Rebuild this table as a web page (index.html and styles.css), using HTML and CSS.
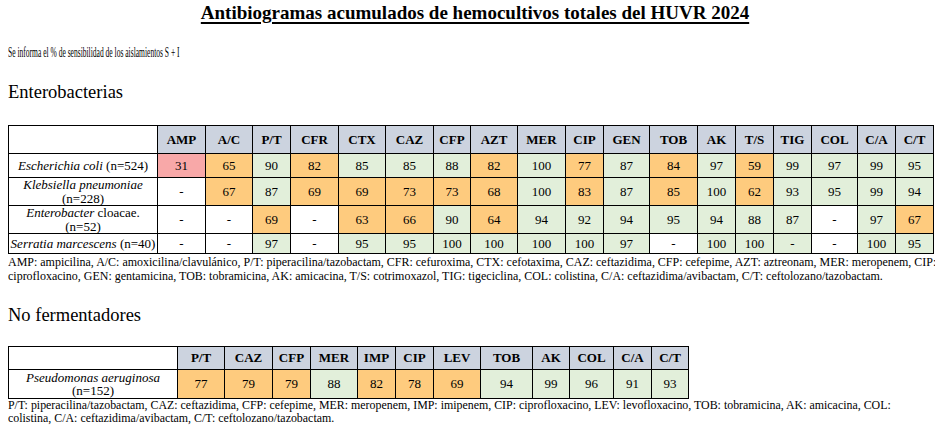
FILE: index.html
```html
<!DOCTYPE html>
<html lang="es">
<head>
<meta charset="utf-8">
<title>Antibiogramas acumulados HUVR 2024</title>
<link rel="stylesheet" href="styles.css">
</head>
<body>
<h1 class="title">Antibiogramas acumulados de hemocultivos totales del HUVR 2024</h1>
<p class="intro"><span class="squeeze">Se informa el % de sensibilidad de los aislamientos S + I</span></p>

<h2 class="section">Enterobacterias</h2>
<table class="abg t1">
  <colgroup>
    <col class="w149"><col class="w48"><col class="w47"><col class="w38"><col class="w48"><col class="w47"><col class="w48"><col class="w37"><col class="w47"><col class="w48"><col class="w38"><col class="w46"><col class="w48"><col class="w38"><col class="w38"><col class="w38"><col class="w46"><col class="w38"><col class="w38">
  </colgroup>
  <tr class="hrow">
    <th class="blank"></th><th>AMP</th><th>A/C</th><th>P/T</th><th>CFR</th><th>CTX</th><th>CAZ</th><th>CFP</th><th>AZT</th><th>MER</th><th>CIP</th><th>GEN</th><th>TOB</th><th>AK</th><th>T/S</th><th>TIG</th><th>COL</th><th>C/A</th><th>C/T</th>
  </tr>
  <tr class="r1">
    <td class="org"><i>Escherichia coli</i> (n=524)</td>
    <td class="r">31</td><td class="o">65</td><td class="g">90</td><td class="o">82</td><td class="g">85</td><td class="g">85</td><td class="g">88</td><td class="o">82</td><td class="g">100</td><td class="o">77</td><td class="g">87</td><td class="o">84</td><td class="g">97</td><td class="o">59</td><td class="g">99</td><td class="g">97</td><td class="g">99</td><td class="g">95</td>
  </tr>
  <tr class="r2">
    <td class="org"><i>Klebsiella pneumoniae</i><br>(n=228)</td>
    <td class="w">-</td><td class="o">67</td><td class="g">87</td><td class="o">69</td><td class="o">69</td><td class="o">73</td><td class="o">73</td><td class="o">68</td><td class="g">100</td><td class="o">83</td><td class="g">87</td><td class="o">85</td><td class="g">100</td><td class="o">62</td><td class="g">93</td><td class="g">95</td><td class="g">99</td><td class="g">94</td>
  </tr>
  <tr class="r3">
    <td class="org"><i>Enterobacter</i> cloacae.<br>(n=52)</td>
    <td class="w">-</td><td class="w">-</td><td class="o">69</td><td class="w">-</td><td class="o">63</td><td class="o">66</td><td class="g">90</td><td class="o">64</td><td class="g">94</td><td class="g">92</td><td class="g">94</td><td class="g">95</td><td class="g">94</td><td class="g">88</td><td class="g">87</td><td class="w">-</td><td class="g">97</td><td class="o">67</td>
  </tr>
  <tr class="r4">
    <td class="org"><i>Serratia marcescens</i> (n=40)</td>
    <td class="w">-</td><td class="w">-</td><td class="g">97</td><td class="w">-</td><td class="g">95</td><td class="g">95</td><td class="g">100</td><td class="g">100</td><td class="g">100</td><td class="g">100</td><td class="g">97</td><td class="w">-</td><td class="g">100</td><td class="g">100</td><td class="g">-</td><td class="w">-</td><td class="g">100</td><td class="g">95</td>
  </tr>
</table>
<p class="legend legend1"><span class="squeeze2">AMP: ampicilina, A/C: amoxicilina/clavulánico, P/T: piperacilina/tazobactam, CFR: cefuroxima, CTX: cefotaxima, CAZ: ceftazidima, CFP: cefepime, AZT: aztreonam, MER: meropenem, CIP:<br>ciprofloxacino, GEN: gentamicina, TOB: tobramicina, AK: amicacina, T/S: cotrimoxazol, TIG: tigeciclina, COL: colistina, C/A: ceftazidima/avibactam, C/T: ceftolozano/tazobactam.</span></p>

<h2 class="section section2">No fermentadores</h2>
<table class="abg t2">
  <colgroup>
    <col class="w169"><col class="w47"><col class="w48"><col class="w38"><col class="w47"><col class="w38"><col class="w38"><col class="w47"><col class="w52"><col class="w37"><col class="w44"><col class="w38"><col class="w37">
  </colgroup>
  <tr class="hrow2">
    <th class="blank"></th><th>P/T</th><th>CAZ</th><th>CFP</th><th>MER</th><th>IMP</th><th>CIP</th><th>LEV</th><th>TOB</th><th>AK</th><th>COL</th><th>C/A</th><th>C/T</th>
  </tr>
  <tr class="r5">
    <td class="org"><i>Pseudomonas aeruginosa</i><br>(n=152)</td>
    <td class="o">77</td><td class="o">79</td><td class="o">79</td><td class="g">88</td><td class="o">82</td><td class="o">78</td><td class="o">69</td><td class="g">94</td><td class="g">99</td><td class="g">96</td><td class="g">91</td><td class="g">93</td>
  </tr>
</table>
<p class="legend legend2"><span class="squeeze3">P/T: piperacilina/tazobactam, CAZ: ceftazidima, CFP: cefepime, MER: meropenem, IMP: imipenem, CIP: ciprofloxacino, LEV: levofloxacino, TOB: tobramicina, AK: amicacina, COL:<br>colistina, C/A: ceftazidima/avibactam, C/T: ceftolozano/tazobactam.</span></p>
</body>
</html>
```

FILE: styles.css
```css
html, body {
  background: #ffffff;
}
body {
  margin: 0 8px;
  font-family: "Liberation Serif", "Times New Roman", serif;
  color: #000000;
}
.title {
  margin: 2px 0 0;
  padding-left: 7px;
  text-align: center;
  font-size: 19px;
  line-height: 22px;
  font-weight: bold;
  text-decoration: underline;
  text-decoration-thickness: 2px;
  text-underline-offset: 3px;
}
.intro {
  margin: 20px 0 0;
  font-size: 14.5px;
  line-height: 16px;
  white-space: nowrap;
}
.squeeze {
  display: inline-block;
  transform: scaleX(0.52);
  transform-origin: 0 0;
}
.section {
  margin: 21px 0 0;
  font-size: 18.5px;
  line-height: 22px;
  font-weight: normal;
}
.abg {
  border-collapse: collapse;
  table-layout: fixed;
  margin-top: 22px;
}
.t1 { width: 925px; }
.t2 { width: 680px; margin-top: 20px; }
.abg th, .abg td {
  border: 1px solid #000000;
  padding: 0;
  text-align: center;
  vertical-align: middle;
  font-size: 13px;
  line-height: 13.5px;
  white-space: nowrap;
  overflow: hidden;
}
.abg th {
  background: #ccd3df;
  font-weight: bold;
}
.abg th.blank { background: #ffffff; }
.abg td.org { background: #ffffff; }
.r { background: #f8a8a8; }
.o { background: #fecb7e; }
.g { background: #e2efda; }
.w { background: #ffffff; }
.hrow { height: 28px; }
.r1 { height: 24px; }
.r2 { height: 27px; }
.r3 { height: 28px; }
.r4 { height: 20px; }
.hrow2 { height: 23px; }
.r5 { height: 29px; }
.w149 { width: 149px; }
.w169 { width: 169px; }
.w52 { width: 52px; }
.w48 { width: 48px; }
.w47 { width: 47px; }
.w46 { width: 46px; }
.w44 { width: 44px; }
.w38 { width: 38px; }
.w37 { width: 37px; }
.legend {
  margin: 0;
  white-space: nowrap;
}
.legend1 {
  padding-top: 1px;
  font-size: 12.5px;
  line-height: 14px;
}
.squeeze2 {
  display: inline-block;
  transform: scaleX(0.958);
  transform-origin: 0 0;
}
.section2 {
  margin-top: 21px;
}
.legend2 {
  font-size: 12.5px;
  line-height: 13px;
}
.squeeze3 {
  display: inline-block;
  transform: scaleX(0.952);
  transform-origin: 0 0;
}
```
